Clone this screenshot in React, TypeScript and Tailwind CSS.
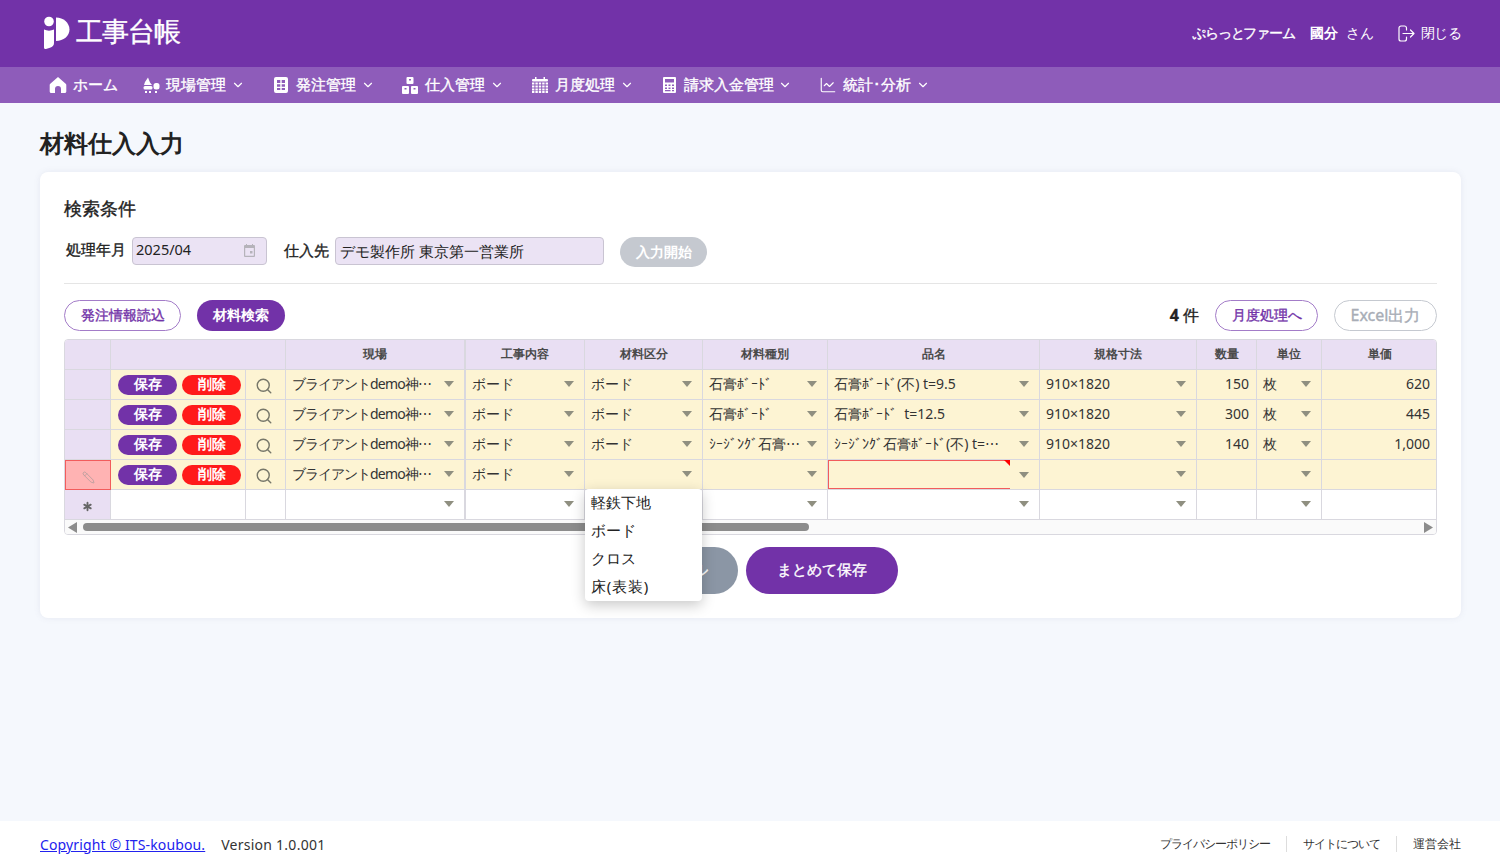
import React from "react";
import { ChevronDown, ChartLine, Search, Pencil, Asterisk } from "lucide-react";

const Logo = () => (
  <svg width="28" height="33" viewBox="0 0 28 33" fill="white">
    <circle cx="6" cy="5.5" r="4.8" />
    <path d="M1 13.5c3 1.5 7 1.5 10 0V27c0 2.500-1.500 4-4 4.700L3 33c-1.200.3-2-.3-2-1.500z" />
    <path d="M13 1.500c7.500 0 13.500 5.500 13.500 12S20.500 25 13 25V1.500z" />
  </svg>
);
const HomeIcon = () => (
  <svg width="18" height="18" viewBox="0 0 18 18" fill="white">
    <path d="M9 1 1.300 7.800c-.4.300-.6.800-.6 1.300V15.500c0 .8.700 1.500 1.500 1.500H6v-4a3 3 0 0 1 6 0v4h3.800c.8 0 1.500-.7 1.500-1.500V9.100c0-.5-.2-1-.6-1.300z" />
  </svg>
);
const SiteIcon = () => (
  <svg width="17" height="18" viewBox="0 0 17 18" fill="white">
    <path d="M5 1.500 7 6.500 9 9H1l1-3z" />
    <rect x="0.500" y="10" width="9" height="3.500" rx="1.500" />
    <rect x="2" y="15" width="2" height="2" />
    <rect x="6" y="15" width="2" height="2" />
    <rect x="10.500" y="7" width="6" height="6.500" rx="2.500" />
    <rect x="12" y="15" width="2" height="2" />
  </svg>
);
const OrderIcon = () => (
  <svg width="14" height="16" viewBox="0 0 14 16">
    <path fillRule="evenodd" fill="white" d="M2 0h10a2 2 0 0 1 2 2v12a2 2 0 0 1-2 2H2a2 2 0 0 1-2-2V2a2 2 0 0 1 2-2zM3 3v3h3.300V3zM7.700 3v3H11V3zM3 7.300v2.400h3.300V7.300zM7.700 7.300v2.400H11V7.300zM3 11v2h3.300v-2zM7.700 11v2H11v-2z" />
  </svg>
);
const BoxesIcon = () => (
  <svg width="16" height="17" viewBox="0 0 16 17">
    <path fillRule="evenodd" fill="white" d="M5.500 0h5a1 1 0 0 1 1 1v5a1 1 0 0 1-1 1h-5a1 1 0 0 1-1-1V1a1 1 0 0 1 1-1zM7 2v1.500h2V2zM1 9h5a1 1 0 0 1 1 1v6a1 1 0 0 1-1 1H1a1 1 0 0 1-1-1v-6a1 1 0 0 1 1-1zM2.500 11v1.500h2V11zM10 9h5a1 1 0 0 1 1 1v6a1 1 0 0 1-1 1h-5a1 1 0 0 1-1-1v-6a1 1 0 0 1 1-1zM11.500 11v1.500h2V11z" />
  </svg>
);
const CalendarIcon = () => (
  <svg width="16" height="16" viewBox="0 0 16 16" fill="white">
    <rect x="3" y="0" width="1.500" height="3" />
    <rect x="11.500" y="0" width="1.500" height="3" />
    <rect x="0" y="2" width="16" height="2.500" rx="1" />
    {[5.5, 8.5, 11.5, 14].map((y) =>
      [0, 3.4, 6.8, 10.2, 13.6].map((x) => <rect key={`${x}-${y}`} x={x} y={y} width="2.400" height="2" />)
    )}
  </svg>
);
const CalcIcon = () => (
  <svg width="13" height="16" viewBox="0 0 13 16">
    <path fillRule="evenodd" fill="white" d="M1 0h11a1 1 0 0 1 1 1v14a1 1 0 0 1-1 1H1a1 1 0 0 1-1-1V1a1 1 0 0 1 1-1zM2 2v3.500h9V2zM2 7.500v1.500h2V7.500zM5.500 7.500v1.500h2V7.500zM9 7.500v1.500h2V7.500zM2 10.500V12h2v-1.500zM5.500 10.500V12h2v-1.500zM9 10.500V12h2v-1.500zM2 13v1.200h5.500V13zM9 13v1.200h2V13z" />
  </svg>
);
const ExitIcon = () => (
  <svg width="17" height="17" viewBox="0 0 17 17" fill="none" stroke="white" strokeWidth="1.200" strokeLinecap="round" strokeLinejoin="round">
    <path d="M8.500 5V3a2 2 0 0 0-2-2H3a2 2 0 0 0-2 2v11a2 2 0 0 0 2 2h3.500a2 2 0 0 0 2-2v-2" />
    <path d="M5 8.500h11M12.500 5l3.500 3.500-3.500 3.500" />
  </svg>
);
const SmallCal = () => (
  <svg width="11" height="13" viewBox="0 0 11 13">
    <path fillRule="evenodd" fill="#b5b3ba" d="M2 0h1v1h5V0h1v1h1a1 1 0 0 1 1 1v10a1 1 0 0 1-1 1H1a1 1 0 0 1-1-1V2a1 1 0 0 1 1-1h1zM1.200 4v7.800h8.600V4zM6 7h2.500v2.500H6z" />
  </svg>
);
const Caret = () => (
  <svg width="10" height="6" viewBox="0 0 10 6" className="shrink-0">
    <path d="M0 0h10L5 6z" fill="#8f8f80" />
  </svg>
);

const menu: [React.ReactNode, string, boolean, string][] = [
  [<HomeIcon />, "ホーム", false, "w-[93px]"],
  [<SiteIcon />, "現場管理", true, "w-[130px]"],
  [<OrderIcon />, "発注管理", true, "w-[129px]"],
  [<BoxesIcon />, "仕入管理", true, "w-[130px]"],
  [<CalendarIcon />, "月度処理", true, "w-[129px]"],
  [<CalcIcon />, "請求入金管理", true, "w-[159px]"],
  [<ChartLine size={20} strokeWidth={1.5} color="white" />, "統計･分析", true, "w-[120px]"],
];

const semi = "[-webkit-text-stroke:0.35px_currentColor]";
const gridCols = "grid-cols-[46px_135px_40px_180px_119px_118px_125px_212px_157px_60px_65px_116px]";
const cellBase = "h-[30px] border-r border-b border-[#d9d8df] flex items-center min-w-0";

const Site = () => (
  <>
    <span className="tracking-[-1px]">ブライアント</span>
    <span className="tracking-[-0.8px]">demo神⋯</span>
  </>
);

const rows = [
  { work: "ボード", cat: "ボード", kind: "石膏ﾎﾞｰﾄﾞ", item: "石膏ﾎﾞｰﾄﾞ(不) t=9.5", size: "910×1820", qty: "150", unit: "枚", price: "620" },
  { work: "ボード", cat: "ボード", kind: "石膏ﾎﾞｰﾄﾞ", item: "石膏ﾎﾞｰﾄﾞ  t=12.5", size: "910×1820", qty: "300", unit: "枚", price: "445" },
  { work: "ボード", cat: "ボード", kind: "ｼｰｼﾞﾝｸﾞ石膏⋯", item: "ｼｰｼﾞﾝｸﾞ石膏ﾎﾞｰﾄﾞ(不) t=⋯", size: "910×1820", qty: "140", unit: "枚", price: "1,000" },
  { work: "ボード", cat: "", kind: "", item: "", size: "", qty: "", unit: "", price: "", editing: true },
];

const Combo = ({ text, bg, extra = "" }: { text?: React.ReactNode; bg: string; extra?: string }) => (
  <div className={`${cellBase} ${bg} ${extra} pl-[6px] pr-[10px] gap-1 justify-between`}>
    <span className="text-[14px] text-[#333] pb-[3px] whitespace-pre">{text}</span>
    <span className="flex pb-[1px]"><Caret /></span>
  </div>
);

const Head = ({ children, cls = "" }: { children?: React.ReactNode; cls?: string }) => (
  <div className={`h-[30px] bg-[#e9dff3] border-r border-b border-[#d9d8df] flex items-center justify-center pb-[2px] text-[12px] font-bold text-[#4a4a4a] ${cls}`}>
    {children}
  </div>
);

function Actions({ bg }: { bg: string }) {
  return (
    <>
      <div className={`${cellBase} ${bg} pl-[7px] gap-[5px]`}>
        <button className="w-[59px] h-[20px] rounded-full bg-[#7232a8] text-white text-[14px] font-bold leading-none pb-px">保存</button>
        <button className="w-[59px] h-[20px] rounded-full bg-[#ff1a1a] text-white text-[14px] font-bold leading-none pb-px">削除</button>
      </div>
      <div className={`${cellBase} ${bg} justify-center pt-[3px] pr-[3px]`}>
        <Search size={18} strokeWidth={1.9} color="#77776a" />
      </div>
    </>
  );
}

export default function App() {
  const yellow = "bg-[#fdf4d3]";
  return (
    <div lang="ja" className="min-h-[867px] h-screen flex flex-col bg-[#f5f8fd] font-['Noto_Sans_CJK_JP','Noto_Sans',sans-serif] text-[#222]">
      <header className="h-[67px] bg-[#7232a8] flex items-center justify-between pl-[43px] pr-[39px] text-white shrink-0">
        <div className="flex items-center gap-[5px] pb-[3px]">
          <Logo />
          <span className={`text-[27px] leading-none tracking-[-1px] pb-[3px] ${semi}`}>工事台帳</span>
        </div>
        <div className="flex items-center text-[14px] pb-[3px]">
          <span className={`tracking-[-1.1px] ${semi}`}>ぷらっとファーム</span>
          <span className="font-bold ml-[15px] tracking-[-0.3px]">國分</span>
          <span className="ml-[8px]">さん</span>
          <span className="ml-[24px] mr-[6px] flex pt-[3px]"><ExitIcon /></span>
          <span className="tracking-[-0.5px]">閉じる</span>
        </div>
      </header>

      <nav className="h-[36px] bg-[#8e5cba] flex items-center pl-[49px] text-white shrink-0">
        {menu.map(([icon, label, arrow, w]) => (
          <div key={label} className={`flex items-center ${w}`}>
            <span className="w-[18px] flex justify-center mr-[6px]">{icon}</span>
            <span className={`text-[15px] tracking-[-0.1px] pb-[2px] ${semi}`}>{label}</span>
            {arrow && <ChevronDown size={14} strokeWidth={2} className="ml-[5px]" />}
          </div>
        ))}
      </nav>

      <main className="flex-1 px-[40px] pr-[39px]">
        <h1 className="text-[24px] font-bold leading-none mt-[28px] mb-[17px] text-[#222]">材料仕入入力</h1>
        <section className="bg-white rounded-lg shadow-[0_0_6px_rgba(120,120,160,0.12)] px-[24px] pt-[24px] h-[446px]">
          <h2 className={`text-[18px] leading-[24px] text-[#222] ${semi}`}>検索条件</h2>
          <div className="flex items-center mt-[17px] h-[30px] pb-[1px]">
            <span className={`text-[15px] ml-[2px] mr-[6px] pb-[4px] ${semi}`}>処理年月</span>
            <div className="w-[135px] h-[28px] mb-[1px] bg-[#ebe3f4] border border-[#c9c4d2] rounded flex items-center justify-between pl-[3px] pr-[11px] font-['Liberation_Sans',sans-serif] text-[14.500px] pb-[2px]">
              2025/04
              <SmallCal />
            </div>
            <span className={`text-[15px] ml-[17px] mr-[6px] pb-[3px] ${semi}`}>仕入先</span>
            <div className="w-[269px] h-[28px] mb-[1px] bg-[#ebe3f4] border border-[#c9c4d2] rounded flex items-center pl-[4px] text-[15px]">
              デモ製作所 東京第一営業所
            </div>
            <button className="ml-[16px] w-[87px] h-[30px] rounded-full bg-[#c5c9d0] text-white text-[14px] font-bold pb-[1px]">入力開始</button>
          </div>
          <div className="border-t border-[#e5e5e5] mt-[16px]" />

          <div className="flex items-center justify-between mt-[16px] h-[31px]">
            <div className="flex gap-[16px]">
              <button className={`w-[117px] h-[31px] rounded-full border border-[#a37cc8] bg-white text-[#7232a8] text-[14px] pb-[2px] ${semi}`}>発注情報読込</button>
              <button className="w-[88px] h-[31px] rounded-full bg-[#7232a8] text-white text-[14px] font-bold pb-[2px]">材料検索</button>
            </div>
            <div className="flex items-center">
              <span className={`text-[16px] mr-[16px] pb-[2px] ${semi}`}><b>4</b> 件</span>
              <button className={`w-[103px] h-[31px] rounded-full border border-[#a37cc8] bg-white text-[#7232a8] text-[14px] pb-[2px] ${semi}`}>月度処理へ</button>
              <button className={`ml-[16px] w-[103px] h-[31px] rounded-full border border-[#c5c9d0] bg-white text-[#a8adb6] text-[16px] pb-[2px] ${semi}`}>Excel出力</button>
            </div>
          </div>

          <div className="relative mt-[8px]">
            <div className="border border-[#d9d8df] rounded overflow-hidden">
              <div className={`grid ${gridCols}`}>
                <Head />
                <Head cls="col-span-2" />
                <Head cls="border-r-2">現場</Head>
                <Head>工事内容</Head>
                <Head>材料区分</Head>
                <Head>材料種別</Head>
                <Head>品名</Head>
                <Head>規格寸法</Head>
                <Head>数量</Head>
                <Head>単位</Head>
                <Head cls="border-r-0">単価</Head>

                {rows.map((r, i) => (
                  <React.Fragment key={i}>
                    {r.editing ? (
                      <div className="h-[30px] bg-[#ffb3b3] border border-[#f25c5c] flex items-center justify-center pt-[4px]">
                        <Pencil size={13} strokeWidth={1.3} color="#a89a9a" className="-scale-x-100" />
                      </div>
                    ) : (
                      <div className="h-[30px] bg-[#e9dff3] border-r border-b border-[#d9d8df]" />
                    )}
                    <Actions bg={yellow} />
                    <Combo text={<Site />} bg={yellow} extra="border-r-2" />
                    <Combo text={r.work} bg={yellow} />
                    <Combo text={r.cat} bg={yellow} />
                    <Combo text={r.kind} bg={yellow} />
                    {r.editing ? (
                      <div className={`${cellBase} ${yellow} pr-[10px] relative justify-end`}>
                        <div className="absolute left-0 top-0 bottom-0 w-[182px] border border-r-0 border-[#f25c5c]" />
                        <div className="absolute left-[176px] top-0 w-0 h-0 border-t-[6px] border-l-[6px] border-t-[#ff0000] border-l-transparent" />
                        <Caret />
                      </div>
                    ) : (
                      <Combo text={r.item} bg={yellow} />
                    )}
                    <Combo text={r.size} bg={yellow} />
                    <div className={`${cellBase} ${yellow} justify-end pr-[7px] pb-[2px] text-[14px] text-[#333]`}>{r.qty}</div>
                    <Combo text={r.unit} bg={yellow} />
                    <div className={`${cellBase} ${yellow} border-r-0 justify-end pr-[8px] pb-[2px] text-[14px] text-[#333]`}>{r.price}</div>
                  </React.Fragment>
                ))}

                <div className="h-[30px] bg-[#e9dff3] border-r border-b border-[#d9d8df] flex items-center justify-center pt-[4px]">
                  <Asterisk size={15} strokeWidth={3} color="#666" />
                </div>
                <div className={`${cellBase} bg-white`} />
                <div className={`${cellBase} bg-white`} />
                <Combo bg="bg-white" extra="border-r-2" />
                <Combo bg="bg-white" />
                <Combo bg="bg-white" />
                <Combo bg="bg-white" />
                <Combo bg="bg-white" />
                <Combo bg="bg-white" />
                <div className={`${cellBase} bg-white`} />
                <Combo bg="bg-white" />
                <div className={`${cellBase} bg-white border-r-0`} />
              </div>
              <div className="h-[14px] bg-[#fafafa] flex items-center pl-[3px] pr-[3px]">
                <svg width="9" height="11" viewBox="0 0 9 11" className="shrink-0"><path d="M9 0v11L0 5.500z" fill="#8c8c8c" /></svg>
                <div className="ml-[6px] w-[726px] h-[8px] rounded-full bg-[#8c8c8c]" />
                <svg width="9" height="11" viewBox="0 0 9 11" className="ml-auto shrink-0"><path d="M0 0v11l9-5.500z" fill="#8c8c8c" /></svg>
              </div>
            </div>

            <div className="absolute left-[521px] top-[150px] w-[117px] h-[112px] bg-white rounded shadow-[0_4px_14px_rgba(0,0,0,0.22)] z-10 pl-[6px] text-[15px] text-[#222]">
              <div className="h-[28px] leading-[27px]">軽鉄下地</div>
              <div className="h-[28px] leading-[27px]">ボード</div>
              <div className="h-[28px] leading-[27px]">クロス</div>
              <div className="h-[28px] leading-[27px] tracking-[0.8px]">床(表装)</div>
            </div>
          </div>

          <div className="flex justify-center gap-[8px] mt-[12px]">
            <button className={`w-[134px] h-[47px] rounded-full bg-[#8b96a5] text-white text-[15px] pb-[2px] ${semi}`}>キャンセル</button>
            <button className={`w-[152px] h-[47px] rounded-full bg-[#7232a8] text-white text-[15px] pb-[2px] ${semi}`}>まとめて保存</button>
          </div>
        </section>
      </main>

      <footer className="h-[46px] bg-white flex items-center justify-between pl-[40px] pr-[39px] shrink-0">
        <div className="flex items-center text-[14px]">
          <a className="text-[#2222ee] underline tracking-[0.13px]">Copyright © ITS-koubou.</a>
          <span className="ml-[16px] text-[#333] tracking-[0.25px]">Version 1.0.001</span>
        </div>
        <div className="flex items-center text-[12px] text-[#333]">
          <span className="tracking-[-1px]">プライバシーポリシー</span>
          <span className="mx-[16px] w-px h-[16px] bg-[#ddd]" />
          <span className="tracking-[-1px]">サイトについて</span>
          <span className="mx-[16px] w-px h-[16px] bg-[#ddd]" />
          <span>運営会社</span>
        </div>
      </footer>
    </div>
  );
}
